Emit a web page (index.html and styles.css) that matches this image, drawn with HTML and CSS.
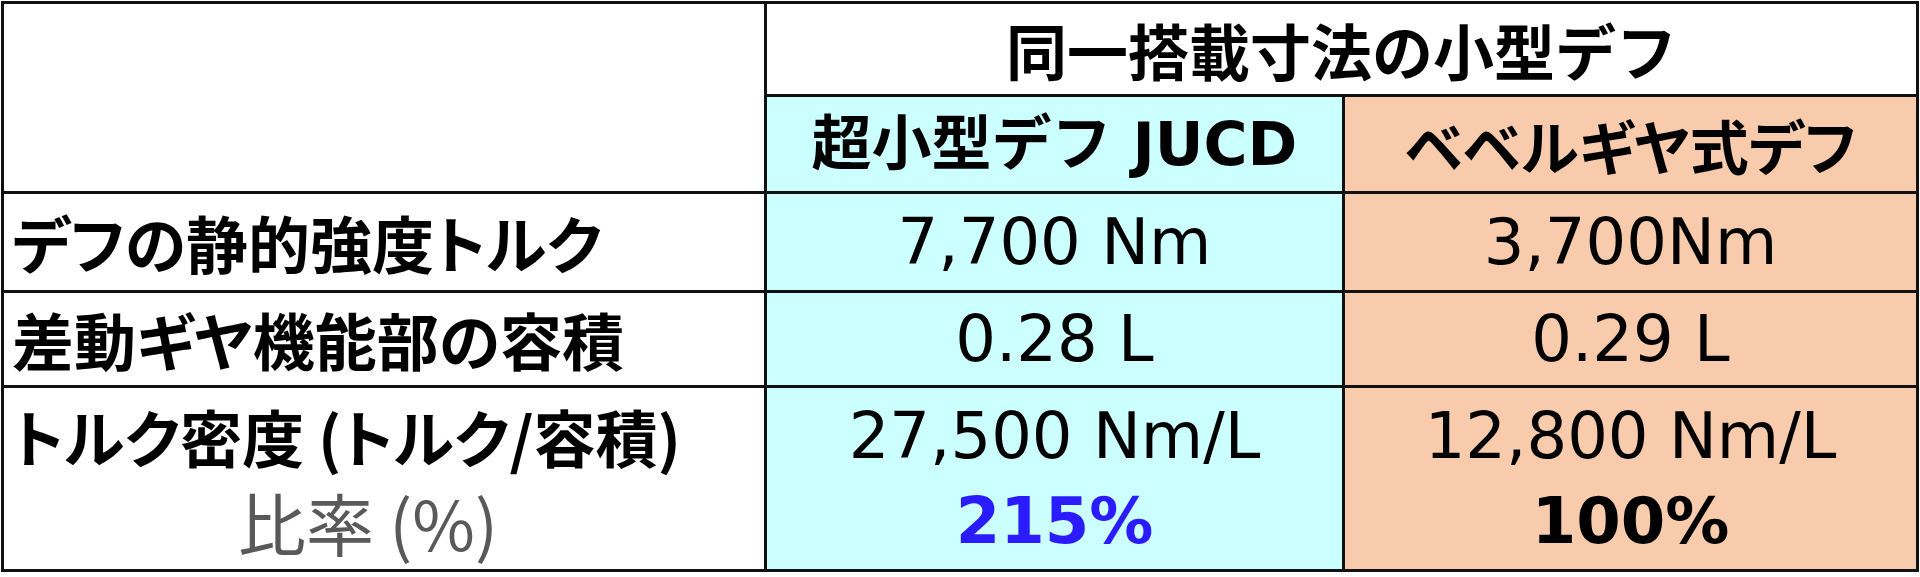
FILE: index.html
```html
<!DOCTYPE html>
<html lang="ja">
<head>
<meta charset="utf-8">
<link rel="stylesheet" href="styles.css">
</head>
<body>
<table class="spec">
  <colgroup>
    <col class="c-label">
    <col class="c-jucd">
    <col class="c-bevel">
  </colgroup>
  <tr class="r-head1">
    <td class="blank" rowspan="2"></td>
    <td class="title" colspan="2">同一搭載寸法の小型デフ</td>
  </tr>
  <tr class="r-head2">
    <td class="head cyan">超小型デフ JUCD</td>
    <td class="head peach">ベベルギヤ式デフ</td>
  </tr>
  <tr class="r-1">
    <td class="label">デフの静的強度トルク</td>
    <td class="val cyan">7,700 Nm</td>
    <td class="val peach">3,700Nm</td>
  </tr>
  <tr class="r-2">
    <td class="label">差動ギヤ機能部の容積</td>
    <td class="val cyan">0.28 L</td>
    <td class="val peach">0.29 L</td>
  </tr>
  <tr class="r-3">
    <td class="label">
      <div class="line">トルク密度 (トルク/容積)</div>
      <div class="line sub">比率 (%)</div>
    </td>
    <td class="val cyan">
      <div class="line">27,500 Nm/L</div>
      <div class="line pct blue">215%</div>
    </td>
    <td class="val peach">
      <div class="line">12,800 Nm/L</div>
      <div class="line pct">100%</div>
    </td>
  </tr>
</table>
</body>
</html>
```
FILE: styles.css
```css
html, body {
  margin: 0;
  padding: 0;
  background: #ffffff;
}
.spec {
  margin: 1px 0 0 1px;
  border-collapse: collapse;
  table-layout: fixed;
  width: 1915px;
  font-family: "DejaVu Sans", "Noto Sans CJK JP", sans-serif;
  color: #000;
}
.c-label { width: 763px; }
.c-jucd { width: 578px; }
.c-bevel { width: 574px; }
.spec td {
  border: 3px solid #111;
  padding: 0;
  vertical-align: middle;
}
.r-head1 td { height: 90px; }
.r-head2 td { height: 94px; }
.r-1 td { height: 96px; }
.r-2 td { height: 92px; }
.r-3 td { height: 181px; }
.blank { background: #fff; }
.title {
  background: #fff;
  text-align: center;
  font-family: "Noto Sans CJK JP", sans-serif;
  font-weight: 700;
  font-size: 61px;
  line-height: 1;
}
.head {
  text-align: center;
  font-family: "Noto Sans CJK JP", sans-serif;
  font-weight: 700;
  font-size: 60px;
  line-height: 1;
}
.head.cyan { font-family: "DejaVu Sans", "Noto Sans CJK JP", sans-serif; }
.head.peach {
  font-size: 59px;
  font-feature-settings: "palt";
}
.cyan { background: #ccffff; }
.peach { background: #f8cbad; }
.label {
  background: #fff;
  padding-left: 8px !important;
  font-family: "Noto Sans CJK JP", sans-serif;
  font-weight: 700;
  font-size: 62px;
  line-height: 1;
  white-space: nowrap;
  font-feature-settings: "palt";
}
.label .line {
  line-height: 85px;
}
.label .sub {
  text-align: center;
  font-weight: 400;
  font-size: 68px;
  color: #595959;
  padding-right: 40px;
  font-feature-settings: normal;
}
.val {
  text-align: center;
  font-size: 64px;
  line-height: 1;
  white-space: nowrap;
}
.val .line { line-height: 85px; }
.pct {
  font-weight: 700;
}
.blue { color: #2b1bff; }
```
